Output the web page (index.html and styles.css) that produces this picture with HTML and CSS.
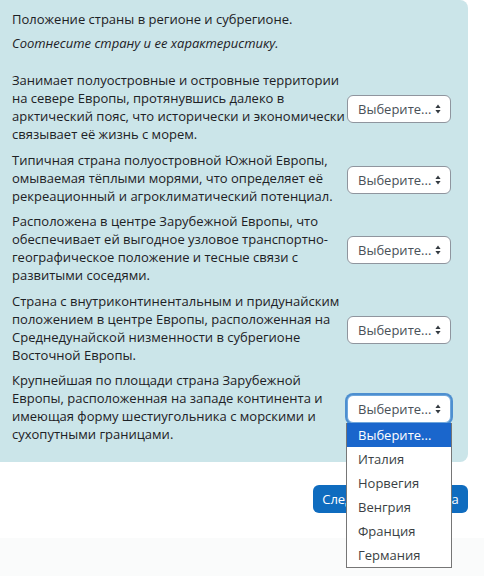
FILE: index.html
```html
<!DOCTYPE html>
<html lang="ru">
<head>
<meta charset="utf-8">
<title>Вопрос на соответствие</title>
<link rel="stylesheet" href="styles.css">
</head>
<body>
<div class="page">
  <div class="formulation">
    <p class="qtext">Положение страны в регионе и субрегионе.</p>
    <p class="qtext instr">Соотнесите страну и ее характеристику.</p>
    <div class="rows">
      <div class="row">
        <div class="text">Занимает полуостровные и островные территории на севере Европы, протянувшись далеко в арктический пояс, что исторически и экономически связывает её жизнь с морем.</div>
        <div class="control"><div class="select"><span>Выберите...</span><svg class="arrows" viewBox="0 0 6 10" width="6" height="10"><path d="M3 0.5 L5.6 4 L0.4 4 Z M0.4 6 L5.6 6 L3 9.5 Z" fill="#343a40"/></svg></div></div>
      </div>
      <div class="row">
        <div class="text">Типичная страна полуостровной Южной Европы, омываемая тёплыми морями, что определяет её рекреационный и агроклиматический потенциал.</div>
        <div class="control"><div class="select"><span>Выберите...</span><svg class="arrows" viewBox="0 0 6 10" width="6" height="10"><path d="M3 0.5 L5.6 4 L0.4 4 Z M0.4 6 L5.6 6 L3 9.5 Z" fill="#343a40"/></svg></div></div>
      </div>
      <div class="row">
        <div class="text">Расположена в центре Зарубежной Европы, что обеспечивает ей выгодное узловое транспортно-географическое положение и тесные связи с развитыми соседями.</div>
        <div class="control"><div class="select"><span>Выберите...</span><svg class="arrows" viewBox="0 0 6 10" width="6" height="10"><path d="M3 0.5 L5.6 4 L0.4 4 Z M0.4 6 L5.6 6 L3 9.5 Z" fill="#343a40"/></svg></div></div>
      </div>
      <div class="row">
        <div class="text">Страна с внутриконтинентальным и придунайским положением в центре Европы, расположенная на Среднедунайской низменности в субрегионе Восточной Европы.</div>
        <div class="control"><div class="select"><span>Выберите...</span><svg class="arrows" viewBox="0 0 6 10" width="6" height="10"><path d="M3 0.5 L5.6 4 L0.4 4 Z M0.4 6 L5.6 6 L3 9.5 Z" fill="#343a40"/></svg></div></div>
      </div>
      <div class="row">
        <div class="text">Крупнейшая по площади страна Зарубежной Европы, расположенная на западе континента и имеющая форму шестиугольника с морскими и сухопутными границами.</div>
        <div class="control">
          <div class="select focused"><span>Выберите...</span><svg class="arrows" viewBox="0 0 6 10" width="6" height="10"><path d="M3 0.5 L5.6 4 L0.4 4 Z M0.4 6 L5.6 6 L3 9.5 Z" fill="#343a40"/></svg>
            <ul class="dropdown">
              <li class="active">Выберите...</li>
              <li>Италия</li>
              <li>Норвегия</li>
              <li>Венгрия</li>
              <li>Франция</li>
              <li>Германия</li>
            </ul>
          </div>
        </div>
      </div>
    </div>
  </div>
  <div class="actions"><button class="btn">Следующая страница</button></div>
  <div class="footer"></div>
</div>
</body>
</html>
```

FILE: styles.css
```css
html, body {
  margin: 0;
  padding: 0;
  background: #ffffff;
}
body {
  font-family: "Open Sans", "DejaVu Sans", sans-serif;
  font-size: 13px;
  line-height: 18px;
  color: #1d2125;
}
.page {
  width: 484px;
}
.formulation {
  width: 468px;
  box-sizing: border-box;
  background: #cbe5e9;
  border-radius: 0 8px 8px 0;
  padding: 10px 12px 19px 12px;
}
.qtext {
  margin: 0;
}
.instr {
  font-style: italic;
  margin-top: 6px;
}
.rows {
  margin-top: 19px;
  display: flex;
  flex-direction: column;
  gap: 7.5px;
}
.row {
  display: grid;
  grid-template-columns: 334px 104px;
  column-gap: 1px;
  align-items: center;
}
.control {
  padding-top: 4px;
}
.select {
  position: relative;
  box-sizing: border-box;
  width: 104px;
  height: 28px;
  border: 1px solid #8f959e;
  border-radius: 6px;
  background: #ffffff;
  display: flex;
  align-items: center;
  justify-content: space-between;
  padding: 0 9px 0 10px;
  color: #495057;
}
.select.focused {
  border-color: #6ea6dc;
  box-shadow: 0 0 0 2px #4d8fd0;
}
.arrows {
  display: block;
}
.dropdown {
  position: absolute;
  z-index: 5;
  top: 27px;
  left: -2px;
  width: 106px;
  box-sizing: border-box;
  margin: 0;
  padding: 0;
  list-style: none;
  background: #ffffff;
  border: 1px solid #767676;
  border-top: none;
}
.dropdown li {
  height: 24px;
  line-height: 24px;
  padding-left: 11px;
  color: #3a3f44;
}
.dropdown li.active {
  background: #1a66cc;
  color: #ffffff;
}
.actions {
  width: 468px;
  display: flex;
  justify-content: flex-end;
  margin-top: 23px;
}
.btn {
  font-family: inherit;
  font-size: 13px;
  line-height: 18px;
  color: #ffffff;
  background: #0f6cbf;
  border: none;
  border-radius: 6px;
  height: 28px;
  width: 155px;
  padding: 0;
  white-space: nowrap;
}
.footer {
  margin-top: 25px;
  height: 40px;
  background: #fafbfb;
}
```
